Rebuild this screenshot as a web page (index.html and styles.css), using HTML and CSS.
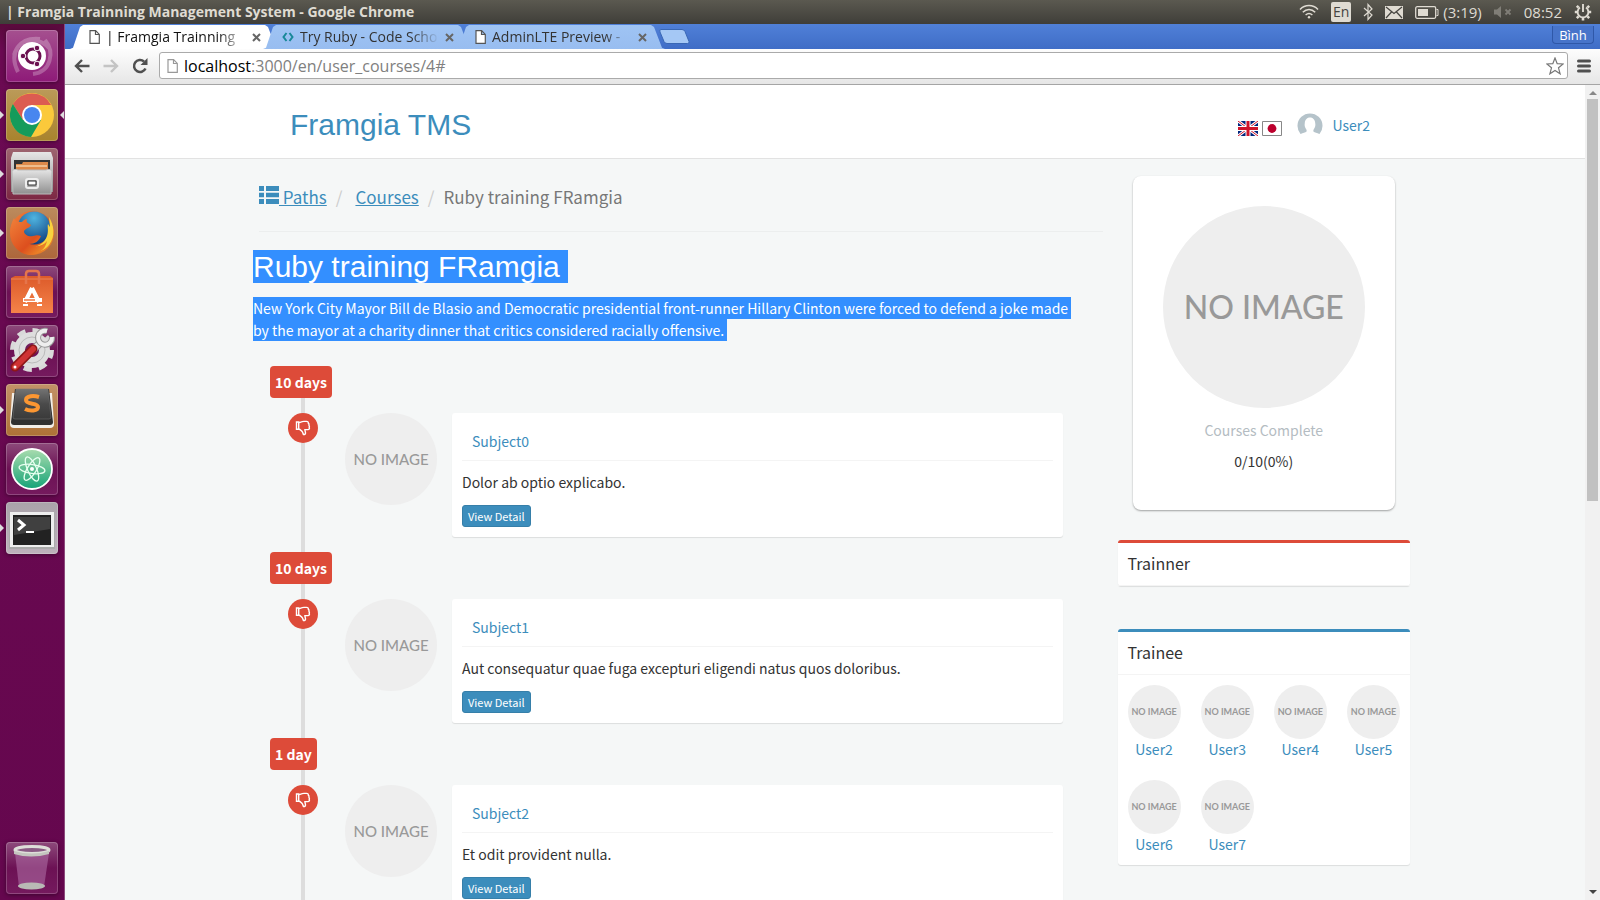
FILE: index.html
```
<!DOCTYPE html>
<html lang="en">
<head>
<meta charset="utf-8">
<title>| Framgia Trainning Management System</title>
<link rel="stylesheet" href="styles.css">
</head>
<body>
<svg class="defs" aria-hidden="true">
  <defs>
    <linearGradient id="steel" x1="0" y1="0" x2="0" y2="1"><stop offset="0" stop-color="#e6e6e6"/><stop offset="1" stop-color="#8f8f8f"/></linearGradient>
    <linearGradient id="dark" x1="0" y1="0" x2="0" y2="1"><stop offset="0" stop-color="#737373"/><stop offset=".5" stop-color="#4a4a4a"/><stop offset="1" stop-color="#3a3a3a"/></linearGradient>
    <linearGradient id="orange" x1="0" y1="0" x2="0" y2="1"><stop offset="0" stop-color="#dc5a2a"/><stop offset="1" stop-color="#f58349"/></linearGradient>
    <linearGradient id="green" x1="0" y1="0" x2="0" y2="1"><stop offset="0" stop-color="#a9dcae"/><stop offset="1" stop-color="#15a377"/></linearGradient>
    <linearGradient id="fox" x1="0" y1="0" x2="1" y2="1"><stop offset="0" stop-color="#f0813a"/><stop offset=".6" stop-color="#dd4f1e"/><stop offset="1" stop-color="#f2a12c"/></linearGradient>
    <radialGradient id="globe" cx=".5" cy=".2" r=".8"><stop offset="0" stop-color="#4fb4e0"/><stop offset="1" stop-color="#0f3f80"/></radialGradient>
  </defs>
  <symbol id="page" viewBox="0 0 11 14"><path d="M1 .7h5.6L10.300 4.400V13.300H1zM6.500.7v3.800h3.800" fill="#fff" stroke="currentColor" stroke-width="1.200"/></symbol>
  <symbol id="close" viewBox="0 0 9 9"><path d="M1 1l7 7M8 1L1 8" stroke="#666" stroke-width="2"/></symbol>
  <symbol id="thumb" viewBox="0 0 16 16"><path d="M1.500 2h2.200v7.200H1.500zM3.700 2.800C6 2 7 1.400 9 1.400h2.500c1.500 0 1.900.8 1.800 1.700.8.600.9 1.300.6 2 .6.700.7 1.400.3 2.100.7 1.500-.1 2.400-1.300 2.400H9.900c0 1.500.6 2 .6 3.300 0 1.200-.8 1.700-2 1.700-.8-1.400-.6-2.600-1.700-3.500C5.900 10.400 5.300 9.300 3.700 9" fill="none" stroke="#fff" stroke-width="1.400"/></symbol>
</svg>

<header class="topbar">
  <span class="window-title">| Framgia Trainning Management System - Google Chrome</span>
  <div class="indicators">
    <svg width="20" height="16" viewBox="0 0 20 16" fill="none" stroke="#dfdbd2" stroke-width="1.500"><path d="M1 5.500C6 .2 14 .2 19 5.500M3.800 8.300C7.500 4.500 12.500 4.500 16.200 8.300M6.600 11C8.800 9 11.200 9 13.400 11"/><circle cx="10" cy="13.300" r="1.200" fill="#dfdbd2" stroke="none"/></svg>
    <span class="lang">En</span>
    <svg width="10" height="18" viewBox="0 0 10 18" fill="none" stroke="#dfdbd2" stroke-width="1.200"><path d="M1 5l8 7-4 4.500V1.500L9 6l-8 7"/></svg>
    <svg width="18" height="13" viewBox="0 0 18 13"><path d="M0 0h18v13H0z" fill="#dfdbd2"/><path d="M1 1l8 6.500L17 1M1 12l5.500-6M17 12l-5.500-6" fill="none" stroke="#45443f" stroke-width="1.200"/></svg>
    <span class="battery"><svg width="24" height="13" viewBox="0 0 24 13"><rect x=".7" y=".7" width="20" height="11.600" rx="1.500" fill="none" stroke="#dfdbd2" stroke-width="1.300"/><path d="M3 3h10v7H3z" fill="#dfdbd2"/><path d="M21.500 3.500h1.500v6h-1.500" fill="none" stroke="#dfdbd2"/></svg>(3:19)</span>
    <svg width="18" height="12" viewBox="0 0 18 12"><path d="M0 3.500h3L7 0v12L3 8.500H0z" fill="#807e77"/><path d="M11.500 3.500l5 5m0-5l-5 5" stroke="#807e77" stroke-width="1.800"/></svg>
    <time class="clock">08:52</time>
    <svg width="18" height="18" viewBox="0 0 18 18" fill="none" stroke="#dfdbd2"><path d="M6 4.500a5.400 5.400 0 1 0 6 0" stroke-width="1.900"/><path d="M9 1v8" stroke-width="1.900"/><path d="M4.600 4.600L2.800 2.800M13.400 4.600l1.800-1.800M3 9H.8M15 9h2.200M4.600 13.400l-1.800 1.800M13.400 13.400l1.800 1.800M9 15v2.500" stroke-width="2.600"/></svg>
  </div>
</header>

<div class="desktop">
<nav class="launcher" aria-label="Launcher">
  <button class="tile ubuntu" aria-label="Dash"><svg viewBox="0 0 52 52"><path d="M12 42C2 22 14 7 34 9M39 10c10 12 6 32-12 34M8 25C13 8 31 5 44 19" fill="none" stroke="#fff" stroke-opacity=".25" stroke-width="4"/><circle cx="26" cy="26" r="14" fill="#fff"/><circle cx="27" cy="26" r="7" fill="none" stroke="#6b1150" stroke-width="3"/><g fill="#6b1150" stroke="#fff"><circle cx="17" cy="26" r="2.800"/><circle cx="31" cy="18" r="2.800"/><circle cx="31" cy="34" r="2.800"/></g></svg></button>
  <button class="tile chrome running focused" aria-label="Google Chrome"><svg viewBox="0 0 52 52"><circle cx="26" cy="26" r="22" fill="#fbc93b"/><path d="M6.900 15A22 22 0 0 1 45.100 16H26L17 31z" fill="#dc5c51"/><path d="M6.900 15A22 22 0 0 0 25 48L35 31 17 31z" fill="#149b5b"/><circle cx="26" cy="26" r="10" fill="#fff"/><circle cx="26" cy="26" r="8" fill="#4886ef"/></svg></button>
  <button class="tile files running" aria-label="Files"><svg viewBox="0 0 52 52"><path d="M7 4h38l2 6v34H5V10z" fill="url(#steel)"/><path d="M8 12h36v12H8z" fill="#333"/><path d="M10 16h6l1-2h25v9H10z" fill="#de8a4a"/><path d="M10 18h31" stroke="#fff0d0"/><path d="M6 23c2-2 4-2 6-1h28c2-1 4-1 6 1l-1 23H7z" fill="url(#steel)" stroke="#bbb"/><rect x="20" y="31" width="12" height="9" rx="2" fill="#aaa" stroke="#eee" stroke-width="2"/><path d="M22 33h8v4h-8z" fill="#fff" stroke="#333"/></svg></button>
  <button class="tile firefox running" aria-label="Firefox"><svg viewBox="0 0 52 52"><circle cx="26" cy="26" r="22" fill="url(#fox)"/><circle cx="28" cy="21" r="16.500" fill="url(#globe)"/><path d="M43 10c5 8 7 19 0 28-8 10-24 9-29 1 12 5 24-1 27-10 2-6 0-9 1-12l2 3z" fill="#f8d33e"/><path d="M8 11c1 3 3 4 8 4 3-3 4-3 5-3-1 3 0 4 4 6-1 3-5 3-7 6 0 4 5 6 9 5 4-1 5-1 8 0-2 5-6 8-12 8 7 4 14 2 18-3-2 10-10 14-18 14C7 46-1 27 8 11z" fill="url(#fox)"/></svg></button>
  <button class="tile software" aria-label="Ubuntu Software"><svg viewBox="0 0 52 52"><path d="M5 12l4-2h35l3 2v35H5z" fill="url(#orange)"/><path d="M5 13h42" stroke="#e98357"/><path d="M20 18V8q0-3 3-3h7q3 0 3 3v10" fill="none" stroke="#e5754b" stroke-width="2.500"/><path d="M26 22l7 14M26 22l-7 14" stroke="#fff" stroke-width="4"/><path d="M17 34h19" stroke="#fff" stroke-width="4"/><path d="M18 34h11" stroke="#ee7642" stroke-width="1.500"/><path d="M17 39h5M31 39h5" stroke="#fff" stroke-width="2"/></svg></button>
  <button class="tile settings" aria-label="System Settings"><svg viewBox="0 0 52 52"><circle cx="26" cy="25" r="19.500" fill="none" stroke="#d9d9d9" stroke-width="5" stroke-dasharray="8.200 7.100"/><circle cx="26" cy="25" r="12.500" fill="none" stroke="#dedede" stroke-width="11"/><circle cx="26" cy="25" r="13" fill="none" stroke="#bbb"/><path d="M27 25l8-8" stroke="#999" stroke-width="8"/><path d="M27 25l8-8" stroke="#e8e8e8" stroke-width="6"/><path d="M41 6a7 7 0 1 0 5 6" fill="none" stroke="#999" stroke-width="6"/><path d="M41 6a7 7 0 1 0 5 6" fill="none" stroke="#eee" stroke-width="4"/><path d="M9 42L27 24" stroke="#8d1717" stroke-width="9" stroke-linecap="round"/><path d="M9 42L27 24" stroke="#cf3333" stroke-width="6" stroke-linecap="round"/><circle cx="9" cy="42" r="1.500" fill="#fff"/></svg></button>
  <button class="tile sublime running" aria-label="Sublime Text"><svg viewBox="0 0 52 52"><path d="M6 9h40l2 31q0 4-4 4H8q-4 0-4-4z" fill="#f2eee8"/><path d="M9 5h34l4 33q0 3-3 3H8q-3 0-3-3z" fill="#303030"/><path d="M10 5h32l3 28q0 2-2 2H9q-2 0-2-2z" fill="url(#dark)" stroke="#777" stroke-width=".5"/><path d="M33 13c-5-1.500-13-1.500-13 3 0 5 12 2.500 12 7 0 4-8 4.500-13 2" fill="none" stroke="#fb9632" stroke-width="4"/></svg></button>
  <button class="tile atom" aria-label="Atom"><svg viewBox="0 0 52 52"><circle cx="26" cy="26" r="20" fill="url(#green)" stroke="#fff" stroke-width="1.800"/><g fill="none" stroke="#e7fff0" stroke-width="1.300"><ellipse cx="26" cy="26" rx="13" ry="4.500" transform="rotate(8 26 26)"/><ellipse cx="26" cy="26" rx="13" ry="4.500" transform="rotate(66 26 26)"/><ellipse cx="26" cy="26" rx="13" ry="4.500" transform="rotate(122 26 26)"/></g><circle cx="26" cy="26" r="2" fill="#fff"/></svg></button>
  <button class="tile terminal running" aria-label="Terminal"><svg viewBox="0 0 52 52"><path d="M3 10h46v37H3z" fill="#aaa"/><path d="M4 10h44v35H4z" fill="#eee"/><path d="M7 13h38v30H7z" fill="#222"/><path d="M8 15h36v12L8 33z" fill="#555" opacity=".6"/><path d="M12 18l6 5-6 5" fill="none" stroke="#fff" stroke-width="3"/><path d="M20 30h8" stroke="#fff" stroke-width="2"/></svg></button>
  <button class="tile trash" aria-label="Trash"><svg viewBox="0 0 52 52"><path d="M9 11l4 34h25l5-34z" fill="#b97bb2" fill-opacity=".5"/><ellipse cx="25.500" cy="44" rx="13.500" ry="3.500" fill="#b9bab5"/><ellipse cx="26" cy="8" rx="17" ry="3.500" fill="#8a5a84" stroke="#deded9" stroke-width="3"/><path d="M8 9v3q17 5 35 0V9q-17 5-35 0" fill="#c4c5bf"/></svg></button>
</nav>

<div class="browser">
  <div class="tabstrip">
    <div class="tabs">
      <button class="tab tab-active"><svg class="page-icon"><use href="#page"/></svg><span>| Framgia Trainning</span><svg class="close-icon"><use href="#close"/></svg></button>
      <button class="tab"><svg class="code-icon" viewBox="0 0 12 10" fill="none" stroke="#198898" stroke-width="2"><path d="M4.500 1L1.500 5l3 4M7.500 1l3 4-3 4"/></svg><span>Try Ruby - Code Scho</span><svg class="close-icon"><use href="#close"/></svg></button>
      <button class="tab"><svg class="page-icon"><use href="#page"/></svg><span>AdminLTE Preview -</span><svg class="close-icon"><use href="#close"/></svg></button>
      <button class="new-tab" aria-label="New tab"><svg width="31" height="15" viewBox="0 0 31 15"><path d="M2 .5h21q2 0 3 2l4 10q.6 2-1.500 2H8q-2 0-3-2L1 3Q0 .5 2 .5z" fill="#a5c8f5" stroke="#3967b5"/></svg></button>
    </div>
    <button class="profile-button">Bình</button>
  </div>
  <div class="toolbar">
    <button class="tool" aria-label="Back"><svg width="16" height="14" viewBox="0 0 16 14" fill="none" stroke="#505050" stroke-width="2.400"><path d="M15.500 7H2M8 1L2 7l6 6"/></svg></button>
    <button class="tool" aria-label="Forward"><svg width="16" height="14" viewBox="0 0 16 14" fill="none" stroke="#c4c4c4" stroke-width="2.400"><path d="M.5 7H14M8 1l6 6-6 6"/></svg></button>
    <button class="tool" aria-label="Reload"><svg width="16" height="16" viewBox="0 0 16 16"><path d="M13.500 10.500A6 6 0 1 1 12 3.500" fill="none" stroke="#505050" stroke-width="2.500"/><path d="M15.500 0v7H8.500z" fill="#505050"/></svg></button>
    <div class="omnibox">
      <svg class="page-icon light"><use href="#page"/></svg>
      <a class="url" href="#"><b>localhost</b>:3000/en/user_courses/4#</a>
      <svg width="18" height="18" viewBox="0 0 18 18"><path d="M9 1l2.200 5.700 6 .3-4.700 3.800 1.600 6L9 13.400l-5.100 3.400 1.600-6L.8 7l6-.3z" fill="#fff" stroke="#777" stroke-width="1.200"/></svg>
    </div>
    <button class="tool menu" aria-label="Menu"><svg width="14" height="14" viewBox="0 0 14 14" stroke="#505050" stroke-width="3" stroke-linecap="round"><path d="M1.500 2h11M1.500 7h11M1.500 12h11"/></svg></button>
  </div>

  <div class="viewport">
    <div class="page">
      <header class="site-header">
        <div class="container header-row">
          <a class="brand" href="#">Framgia TMS</a>
          <div class="header-user">
            <a class="flags" href="#" aria-label="English"><svg width="20" height="15" viewBox="0 0 20 15"><path d="M0 0h20v15H0z" fill="#00247d"/><path d="M0 0l20 15M20 0L0 15" stroke="#fff" stroke-width="3"/><path d="M0 0l20 15M20 0L0 15" stroke="#cf142b" stroke-width="1"/><path d="M10 0v15M0 7.500h20" stroke="#fff" stroke-width="5"/><path d="M10 0v15M0 7.500h20" stroke="#cf142b" stroke-width="3"/></svg></a>
            <a class="flags" href="#" aria-label="Japanese"><svg width="20" height="15" viewBox="0 0 20 15"><path d="M.5.5h19v14H.5z" fill="#fff" stroke="#888"/><circle cx="10" cy="7.500" r="4.400" fill="#bc002d"/></svg></a>
            <a class="account" href="#"><svg width="26" height="23" viewBox="0 0 26 23"><path d="M3.500 21A12.500 12.500 0 1 1 22.500 21q-1-.6-5.500-2c-1-.5-.8-2 0-3 1.500-2 1.500-4 1.200-6C18 2.500 8 2.500 7.800 10c-.3 2-.3 4 1.200 6 .8 1 1 2.500 0 3q-4.500 1.400-5.500 2z" fill="#b5c3ca"/></svg>User2</a>
          </div>
        </div>
      </header>

      <div class="container columns">
        <main class="main">
          <nav class="breadcrumb" aria-label="Breadcrumb">
            <a class="crumb-paths" href="#"><svg width="20" height="18" viewBox="0 0 20 18" fill="#3c8dbc"><path d="M0 0h5v5H0zM7 0h13v5H7zM0 6.700h5v4.600H0zM7 6.700h13v4.600H7zM0 13h5v5H0zM7 13h13v5H7z"/></svg> Paths</a>
            <i>/</i><a class="crumb-courses" href="#">Courses</a><i>/</i><span>Ruby training FRamgia</span>
          </nav>
          <h1><mark>Ruby training FRamgia </mark></h1>
          <p class="intro"><mark>New York City Mayor Bill de Blasio and Democratic presidential front-runner Hillary Clinton were forced to defend a joke made&nbsp;<br>by the mayor at a charity dinner that critics considered racially offensive.&nbsp;</mark></p>

          <ol class="timeline">
            <li>
              <span class="duration">10 days</span>
              <div class="entry">
                <span class="dot"><svg width="16" height="16"><use href="#thumb"/></svg></span>
                <span class="no-image medium">NO IMAGE</span>
                <article class="card"><h2><a href="#">Subject0</a></h2><p>Dolor ab optio explicabo.</p><a class="detail" href="#">View Detail</a></article>
              </div>
            </li>
            <li>
              <span class="duration">10 days</span>
              <div class="entry">
                <span class="dot"><svg width="16" height="16"><use href="#thumb"/></svg></span>
                <span class="no-image medium">NO IMAGE</span>
                <article class="card"><h2><a href="#">Subject1</a></h2><p>Aut consequatur quae fuga excepturi eligendi natus quos doloribus.</p><a class="detail" href="#">View Detail</a></article>
              </div>
            </li>
            <li>
              <span class="duration">1 day</span>
              <div class="entry">
                <span class="dot"><svg width="16" height="16"><use href="#thumb"/></svg></span>
                <span class="no-image medium">NO IMAGE</span>
                <article class="card"><h2><a href="#">Subject2</a></h2><p>Et odit provident nulla.</p><a class="detail" href="#">View Detail</a></article>
              </div>
            </li>
          </ol>
        </main>

        <aside class="side">
          <section class="profile">
            <span class="no-image large">NO IMAGE</span>
            <p class="muted">Courses Complete</p>
            <p>0/10(0%)</p>
          </section>
          <section class="box box-red"><h3>Trainner</h3></section>
          <section class="box box-blue">
            <h3>Trainee</h3>
            <ul class="members">
              <li><span class="no-image small">NO IMAGE</span><a href="#">User2</a></li>
              <li><span class="no-image small">NO IMAGE</span><a href="#">User3</a></li>
              <li><span class="no-image small">NO IMAGE</span><a href="#">User4</a></li>
              <li><span class="no-image small">NO IMAGE</span><a href="#">User5</a></li>
              <li><span class="no-image small">NO IMAGE</span><a href="#">User6</a></li>
              <li><span class="no-image small">NO IMAGE</span><a href="#">User7</a></li>
            </ul>
          </section>
        </aside>
      </div>
    </div>
    <div class="scrollbar" aria-hidden="true"><span class="arrow-up"></span><span class="thumb"></span><span class="arrow-down"></span></div>
  </div>
</div>
</div>
</body>
</html>
```
FILE: styles.css
```
* { box-sizing: border-box; }
body {
  margin: 0;
  height: 100vh;
  overflow: hidden;
  display: flex;
  flex-direction: column;
  font: 14px/22px "Noto Sans CJK JP", "Open Sans", sans-serif;
  color: #333;
}
h1, h2, h3, p, ul, ol { margin: 0; padding: 0; font-weight: 400; }
ul, ol { list-style: none; }
a { color: #3c8dbc; text-decoration: none; }
button { border: 0; padding: 0; background: none; font: inherit; }
svg { flex: none; }
.defs { position: absolute; width: 0; height: 0; }

/* Desktop panel */
.topbar {
  flex: none;
  height: 24px;
  padding: 0 8px 0 6px;
  display: flex;
  align-items: center;
  justify-content: space-between;
  background: linear-gradient(#5b5950, #3f3e39);
  color: #dfdbd2;
  font: 15px/24px "Open Sans", sans-serif;
}
.window-title { font-weight: 700; font-size: 14px; }
.indicators { display: flex; align-items: center; gap: 12px; }
.lang {
  width: 20px;
  height: 20px;
  border-radius: 2px;
  background: #dfdbd2;
  color: #45443f;
  font-size: 14px;
  line-height: 20px;
  text-align: center;
}
.battery { display: flex; align-items: center; gap: 4px; }
.desktop { flex: 1; min-height: 0; display: flex; }

/* Launcher */
.launcher {
  flex: none;
  width: 65px;
  padding: 6px;
  display: flex;
  flex-direction: column;
  gap: 7px;
  background: linear-gradient(#5a0a3c, #6b0a52 3%, #65074e);
  border-right: 1px solid #8c4a7c;
}
.tile {
  position: relative;
  flex: none;
  width: 52px;
  height: 52px;
  border-radius: 4px;
  background: linear-gradient(#8d4a7b, #6c1154 50%, #751a5e);
  box-shadow: inset 0 0 0 1px rgba(255, 255, 255, .2), 0 1px 4px rgba(0, 0, 0, .4);
}
.tile svg { display: block; width: 52px; height: 52px; }
.ubuntu { background: linear-gradient(#a5508f, #8e1a78); }
.chrome { background: linear-gradient(#bb9a59, #a8832d); }
.files { background: linear-gradient(#9d6570, #7c2743); }
.firefox { background: linear-gradient(#bc8b5d, #ad663b); }
.sublime { background: linear-gradient(#c29268, #ae7136); }
.terminal { background: linear-gradient(#aaa3aa, #bdb1bb); }
.trash { margin-top: auto; }
.running::before, .focused::after {
  content: "";
  position: absolute;
  top: 22px;
  left: -6px;
  border: 4px solid transparent;
  border-left-color: #ddd;
  border-right-width: 0;
}
.focused::after {
  left: auto;
  right: -6px;
  border-width: 4px 4px 4px 0;
  border-color: transparent #ddd transparent transparent;
}

/* Browser window */
.browser { flex: 1; min-width: 0; display: flex; flex-direction: column; }
.tabstrip {
  flex: none;
  height: 25px;
  padding: 0 6px 0 5px;
  display: flex;
  justify-content: space-between;
  background: linear-gradient(#5080d8, #3f6dc6);
  font: 15px/24px "Open Sans", sans-serif;
}
.tabs { display: flex; padding-top: 1px; }
.tab {
  width: 209px;
  height: 24px;
  margin-right: -16px;
  padding: 0 18px 0 19px;
  display: flex;
  align-items: center;
  gap: 6px;
  background: linear-gradient(#9fc4f4, #98bdf0);
  color: #333;
  font-size: 14px;
  clip-path: polygon(0 100%, 3px 95%, 10px 8%, 13px 0, 195px 0, 198px 8%, 206px 95%, 209px 100%);
}
.tab-active { background: #fff; position: relative; color: #111; }
.tab span {
  flex: 1;
  min-width: 0;
  overflow: hidden;
  white-space: nowrap;
  text-align: left;
  -webkit-mask-image: linear-gradient(90deg, #000 80%, transparent);
  mask-image: linear-gradient(90deg, #000 80%, transparent);
}
.page-icon { width: 11px; height: 14px; color: #555; }
.light { color: #999; }
.code-icon { width: 12px; height: 10px; }
.close-icon { width: 9px; height: 9px; }
.new-tab { margin: 4px 0 0 10px; height: 15px; line-height: 0; }
.profile-button {
  width: 42px;
  height: 18px;
  margin-top: 2px;
  border: 1px solid #2f58a8;
  border-top: 0;
  border-radius: 0 0 4px 4px;
  background: #4774ca;
  color: #fff;
  font-size: 13px;
  line-height: 16px;
}
.toolbar {
  flex: none;
  height: 36px;
  padding: 0 9px 2px;
  display: flex;
  align-items: center;
  gap: 13px;
  background: linear-gradient(#fdfdfd, #e6e6e6);
  border-bottom: 1px solid #a5a5a5;
}
.tool { line-height: 0; }
.menu { margin-left: -4px; }
.omnibox {
  flex: 1;
  height: 27px;
  margin-left: -2px;
  padding: 0 3px 0 7px;
  display: flex;
  align-items: center;
  gap: 6px;
  background: #fff;
  border: 1px solid #aaa;
  border-radius: 3px;
}
.url { flex: 1; color: #808080; font: 16px/24px "Open Sans", sans-serif; }
.url b { font-weight: 400; color: #000; }

/* Page */
.viewport { flex: 1; min-height: 0; display: flex; background: #f5f7f7; }
.page { flex: 1; min-width: 0; overflow: hidden; }
.container { width: 100%; max-width: 1170px; margin: 0 auto; }
.site-header { background: #fff; border-bottom: 1px solid #e2e2e2; }
.header-row {
  height: 73px;
  padding: 6px 40px 0 50px;
  display: flex;
  align-items: center;
  justify-content: space-between;
}
.brand { font: 30px/33px "Liberation Sans", Arial, sans-serif; }
.header-user { display: flex; align-items: center; gap: 4px; }
.flags { height: 15px; margin-top: 8px; line-height: 0; }
.account { margin-left: 11px; display: flex; align-items: center; gap: 9px; }
.columns { display: flex; align-items: flex-start; }
.main { width: 75%; padding: 0 15px 0 13px; }
.breadcrumb {
  display: flex;
  align-items: center;
  height: 73px;
  margin: 0 0 18px 6px;
  padding-top: 4px;
  border-bottom: 1px solid #eceeee;
  font-size: 17px;
  line-height: 26px;
  color: #777;
}
.breadcrumb a { text-decoration: underline; }
.breadcrumb i { font-style: normal; color: #ccc; padding: 0 9px; }
.crumb-courses { margin-left: 4px; }
mark { background: #338fff; color: #fff; }
h1 { font: 30px/33px "Liberation Sans", Arial, sans-serif; white-space: pre-wrap; }
h1 mark { display: inline-block; }
.intro { margin: 14px 0 25px; }
.intro mark { padding: 1px 0; }
.timeline {
  padding: 0 40px 30px 17px;
  background: linear-gradient(#ddd, #ddd) 48px 0 / 4px 100% no-repeat;
}
.timeline li { margin-bottom: 15px; }
.duration {
  display: inline-block;
  vertical-align: top;
  height: 32px;
  padding: 0 5px;
  border-radius: 4px;
  background: #dd4b39;
  color: #fff;
  font-weight: 700;
  line-height: 33px;
}
.entry {
  margin-top: 15px;
  padding-left: 18px;
  display: flex;
  align-items: flex-start;
}
.dot {
  flex: none;
  width: 30px;
  height: 30px;
  margin-right: 27px;
  display: grid;
  place-items: center;
  border-radius: 50%;
  background: #dd4b39;
}
.no-image {
  flex: none;
  display: grid;
  place-items: center;
  border-radius: 50%;
  background: #eee;
  color: #999;
  font-family: Lato, sans-serif;
  font-weight: 500;
  white-space: nowrap;
}
.medium { width: 92px; height: 92px; font-size: 15px; margin-right: 15px; }
.large { width: 202px; height: 202px; margin: 0 auto; font-size: 32px; }
.small { width: 53px; height: 54px; font-size: 9px; font-weight: 700; }
.card {
  flex: 1;
  min-width: 0;
  padding: 10px;
  background: #fff;
  border-radius: 3px;
  box-shadow: 0 1px 1px rgba(0, 0, 0, .1);
}
.card h2 {
  padding: 7px 10px 8px;
  border-bottom: 1px solid #f4f4f4;
  font-size: 14px;
  line-height: 22px;
}
.card p { padding: 10px 0 12px; }
.detail {
  display: inline-block;
  vertical-align: top;
  padding: 0 5px;
  border: 1px solid #367fa9;
  border-radius: 3px;
  background: #3c8dbc;
  color: #fff;
  font-size: 11px;
  line-height: 20px;
}
.side { width: 25%; padding-top: 17px; }
.profile {
  margin: 0 15px 30px;
  height: 334px;
  padding-top: 30px;
  background: #fff;
  border-radius: 8px;
  box-shadow: 0 1px 2px rgba(0, 0, 0, .35);
  text-align: center;
}
.profile p { margin-top: 9px; }
.profile .muted { margin-top: 11px; color: #b4bcc2; }
.box {
  margin-bottom: 43px;
  background: #fff;
  border-top: 3px solid #dd4b39;
  border-radius: 3px;
  box-shadow: 0 1px 1px rgba(0, 0, 0, .1);
}
.box-blue { border-top-color: #3c8dbc; }
.box h3 { padding: 9px 10px 11px; font-size: 16px; line-height: 22px; border-bottom: 1px solid #f4f4f4; }
.members { display: grid; grid-template-columns: repeat(4, 1fr); }
.members li {
  padding: 10px 10px 9px;
  display: flex;
  flex-direction: column;
  align-items: center;
}
.members a { line-height: 20px; padding-bottom: 2px; }
.scrollbar {
  flex: none;
  width: 15px;
  padding: 6px 2px;
  display: flex;
  flex-direction: column;
  align-items: center;
  background: #f1f1f1;
}
.arrow-up, .arrow-down { border: 4px solid transparent; }
.arrow-up { border-top: 0; border-bottom-color: #888; }
.arrow-down { border-bottom: 0; border-top-color: #444; margin-top: auto; }
.thumb { width: 11px; height: 50%; margin-top: 4px; background: #c1c1c1; }
```
